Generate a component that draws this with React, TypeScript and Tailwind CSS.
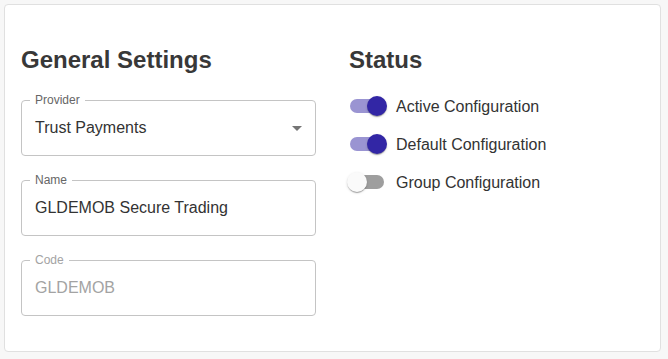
import React, { useState } from "react";

const font = { fontFamily: '"Liberation Sans", Arial, sans-serif' };

type FieldProps = {
  label: string;
  value: string;
  disabled?: boolean;
  select?: boolean;
};

const OutlinedField: React.FC<FieldProps> = ({ label, value, disabled, select }) => (
  <div className="relative h-[56px] w-[295px] rounded-[4px] border border-[#c4c4c4] flex items-center px-[13px] pb-[1px]">
    <span
      className={`absolute left-[8px] top-[-8px] bg-white px-[5px] text-[12px] leading-[14px] ${
        disabled ? "text-[#a3a3a3]" : "text-[#666666]"
      }`}
    >
      {label}
    </span>
    <span className={`text-[16px] leading-[19px] ${disabled ? "text-[#a3a3a3]" : "text-[#333333]"}`}>{value}</span>
    {select && (
      <svg className="absolute right-[6px] top-[15px] h-6 w-6" viewBox="0 0 24 24" fill="#757575">
        <path d="M7 10l5 5 5-5z" />
      </svg>
    )}
  </div>
);

const Toggle: React.FC<{ label: string; initial: boolean }> = ({ label, initial }) => {
  const [on, setOn] = useState(initial);
  return (
    <label className="flex h-[38px] items-center cursor-pointer" onClick={() => setOn(!on)}>
      <span className="relative ml-[-11px] h-[38px] w-[58px] shrink-0">
        <span
          className={`absolute left-[12px] top-[12px] h-[14px] w-[34px] rounded-[7px] ${
            on ? "bg-[#9a94d2]" : "bg-[#9e9e9e]"
          }`}
        />
        <span
          className={`absolute top-[9px] h-[20px] w-[20px] rounded-full shadow-[0_2px_1px_-1px_rgba(0,0,0,0.2),0_1px_1px_0_rgba(0,0,0,0.14),0_1px_3px_0_rgba(0,0,0,0.12)] ${
            on ? "left-[29px] bg-[#3226a5]" : "left-[9px] bg-[#fafafa]"
          }`}
        />
      </span>
      <span className="text-[16px] leading-[19px] text-[#333333]">{label}</span>
    </label>
  );
};

export default function App() {
  return (
    <div className="min-h-[359px] w-full bg-[#f7f7f7] p-[4px]" style={font}>
      <div className="h-[348px] w-[657px] rounded-[4px] border border-[#e0e0e0] bg-white pl-[16px] pt-[40px]">
        <div className="flex gap-[33px]">
          <div className="flex w-[295px] flex-col">
            <h2 className="h-[29px] text-[24px] font-bold leading-[29px] text-[#383838]">General Settings</h2>
            <div className="mt-[26px] flex flex-col gap-[24px]">
              <OutlinedField label="Provider" value="Trust Payments" select />
              <OutlinedField label="Name" value="GLDEMOB Secure Trading" />
              <OutlinedField label="Code" value="GLDEMOB" disabled />
            </div>
          </div>
          <div className="flex flex-col">
            <h2 className="h-[29px] text-[24px] font-bold leading-[29px] text-[#383838]">Status</h2>
            <div className="mt-[13px] flex flex-col">
              <Toggle label="Active Configuration" initial={true} />
              <Toggle label="Default Configuration" initial={true} />
              <Toggle label="Group Configuration" initial={false} />
            </div>
          </div>
        </div>
      </div>
    </div>
  );
}
